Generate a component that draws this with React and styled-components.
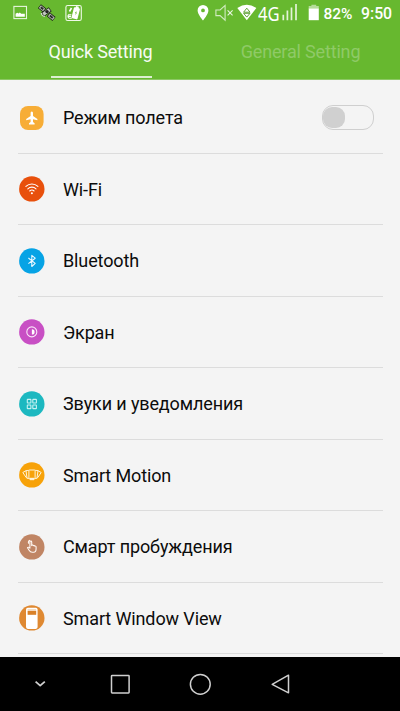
import React from 'react';
import styled, { createGlobalStyle } from 'styled-components';

const GlobalStyle = createGlobalStyle`
  * {
    box-sizing: border-box;
  }

  body {
    margin: 0;
    background: #f4f4f4;
    font-family: Roboto, 'Noto Sans', sans-serif;
  }
`;

const Screen = styled.div`
  width: 400px;
  height: 711px;
  display: flex;
  flex-direction: column;
  overflow: hidden;
  background: #f4f4f4;
`;

const Header = styled.header`
  flex: none;
  height: 80px;
  background: #67b82f;
  border-bottom: 1px solid #8dc865;
`;

const StatusBar = styled.div`
  height: 26px;
  display: flex;
  align-items: center;
  padding: 0 8px 0 12px;
  color: #fff;
`;

const StatusIcon = styled.svg`
  flex: none;
  display: block;
  width: ${({ $w }) => $w}px;
  height: 26px;
  margin-left: ${({ $gap }) => $gap || 0}px;
`;

const StatusText = styled.span`
  flex: none;
  width: ${({ $w }) => $w}px;
  margin-left: ${({ $gap }) => $gap}px;
  font-size: ${({ $size }) => $size}px;
  font-weight: 500;
  line-height: 26px;
  padding-top: 1px;
  white-space: nowrap;
`;

const NetworkText = styled.span`
  flex: none;
  width: 22px;
  margin-left: 1px;
  font-family: 'Noto Sans', sans-serif;
  font-size: 20.5px;
  line-height: 26px;
  white-space: nowrap;
  transform: scaleX(0.81);
  transform-origin: left center;
`;

const Spacer = styled.div`
  flex: 1;
`;

const Tabs = styled.nav`
  display: flex;
  height: 53px;
`;

const Tab = styled.div`
  width: 200px;
  display: flex;
  flex-direction: column;
  align-items: center;
  padding: 1px 0 0 1px;
  font-size: 18px;
  line-height: 49px;
  letter-spacing: -0.16px;
  color: ${({ $active }) => ($active ? '#f6fbf2' : '#8fca67')};
`;

const TabLine = styled.div`
  width: 101px;
  height: 2px;
  margin-left: 2px;
  background: #dcefd0;
`;

const List = styled.main`
  flex: 1;
  min-height: 0;
  overflow: hidden;
  padding: 2px 17.5px 0 18px;
`;

const Row = styled.div`
  display: flex;
  align-items: center;
  height: 71.5px;
  padding: 1px 9px 0 1px;
  border-bottom: 1px solid #dcdcdc;
`;

const Badge = styled.svg`
  flex: none;
  width: 26px;
  height: 26px;
`;

const Label = styled.span`
  flex: 1;
  margin-left: 18px;
  padding-top: 1px;
  font-size: 18px;
  line-height: 24px;
  letter-spacing: -0.12px;
  color: #0c0c0c;
`;

const Switch = styled.div`
  width: 52px;
  height: 25px;
  padding: 1px 0;
  border: 1px solid #cfcfcf;
  border-radius: 11px;
`;

const Knob = styled.div`
  width: 22px;
  height: 21px;
  border-radius: 9px;
  background: #d0d0d0;
`;

const NavBar = styled.footer`
  flex: none;
  height: 54px;
  display: flex;
  background: #000;
`;

const NavButton = styled.div`
  width: 80px;
  height: 54px;
  display: flex;
  align-items: center;
  justify-content: center;
`;

const NavIcon = styled.svg`
  width: 24px;
  height: 24px;
  fill: none;
  stroke: #cfcfcf;
  stroke-width: 1.5;
  stroke-linejoin: round;
`;

const glyphs = {
  plane: (
    <path
      d="M12.8 6.5c.8 0 1.2.8 1.2 1.8v2.6l4.4 3v1.4L14 14.2v2.9l1.6 1.2v1.1h-5.6v-1.1l1.6-1.2v-2.9l-4.4 1.1v-1.4l4.4-3V8.3c0-1 .4-1.8 1.2-1.8z"
      fill="#fff"
    />
  ),
  wifi: (
    <g fill="none" stroke="#fff" strokeWidth="1.1" strokeLinecap="round">
      <path d="M6.9 10.4c3.4-3.2 8.6-3.2 12 0M8.8 12.8c2.3-2.2 5.9-2.2 8.2 0M10.7 15c1.3-1.2 3.1-1.2 4.4 0" />
      <circle cx="12.9" cy="17.3" r=".5" />
    </g>
  ),
  bluetooth: (
    <path
      d="M9.4 10l6.8 5.4-3.4 3.1V7.4l3.4 2.8-6.8 5.4"
      fill="none"
      stroke="#e9f8ff"
      strokeWidth="1.1"
      strokeLinejoin="round"
    />
  ),
  display: (
    <g>
      <circle cx="12.8" cy="12.9" r="5" fill="none" stroke="#fae5f8" strokeWidth="1.1" />
      <path d="M12.9 10.2a2.7 2.7 0 0 1 0 5.4z" fill="#fff" />
    </g>
  ),
  sound: (
    <g fill="none" stroke="#c8f2f2" strokeWidth="1.1">
      <rect x="8.3" y="8.4" width="3.6" height="3.6" rx=".4" />
      <rect x="13.8" y="8.4" width="3.6" height="3.6" rx=".4" />
      <rect x="8.3" y="14" width="3.6" height="3.6" rx=".4" />
      <rect x="13.8" y="14" width="3.6" height="3.6" rx=".4" />
    </g>
  ),
  motion: (
    <g fill="none" stroke="#fff3d6" strokeWidth="1" strokeLinejoin="round">
      <rect x="9.9" y="8" width="6.2" height="8.6" rx=".5" />
      <path d="M9.9 8.3l-2.9.3 1 7.6 1.9.4M7 8.7l-3.2 1.8 3.4 5 1 .6M16.1 8.3l2.9.3-1 7.6-1.9.4M19 8.7l3.2 1.8-3.4 5-1 .6" />
      <path d="M11 16.3h4v1.4h-4z" fill="#fff" />
    </g>
  ),
  wake: (
    <path
      d="M10.9 14.2V7.9c0-1.2 1.8-1.2 1.8 0v3.7c.4-.8 1.5-.7 1.6.2.4-.6 1.4-.4 1.5.4.5-.5 1.3 0 1.3.8v1.8c0 2-1 3.4-2.4 3.4h-1.5c-1.5 0-2.4-.8-3.1-2l-1.6-2.5c.7-.9 1.6-.4 2.4.5zM9.8 9.6c-.9-1.3-.3-2.8 1.2-3.2"
      fill="none"
      stroke="#fff8f3"
      strokeWidth="1.1"
      strokeLinejoin="round"
    />
  ),
  cover: (
    <g>
      <rect x="7" y="2.7" width="11.6" height="21.2" rx="1.8" fill="#fff" />
      <rect x="8.6" y="5.7" width="8.6" height="4.1" fill="#d98128" />
      <path d="M8.6 4.5h8.4" stroke="#efc79b" strokeWidth=".6" />
    </g>
  ),
};

const rows = [
  { label: 'Режим полета', glyph: 'plane', color: '#f7ad36', square: true, toggle: true },
  { label: 'Wi-Fi', glyph: 'wifi', color: '#e8500c' },
  { label: 'Bluetooth', glyph: 'bluetooth', color: '#06a3e5' },
  { label: 'Экран', glyph: 'display', color: '#c84fc4' },
  { label: 'Звуки и уведомления', glyph: 'sound', color: '#1cb8c0' },
  { label: 'Smart Motion', glyph: 'motion', color: '#f7a209' },
  { label: 'Смарт пробуждения', glyph: 'wake', color: '#c08564' },
  { label: 'Smart Window View', glyph: 'cover', color: '#df8932' },
];

const SettingRow = ({ label, glyph, color, square, toggle }) => (
  <Row>
    <Badge viewBox="0 0 26 26">
      {square ? (
        <rect x="1" y="1" width="23.6" height="24" rx="8" fill={color} />
      ) : (
        <circle cx="12.8" cy="12.9" r="12.7" fill={color} />
      )}
      {glyphs[glyph]}
    </Badge>
    <Label>{label}</Label>
    {toggle && (
      <Switch>
        <Knob />
      </Switch>
    )}
  </Row>
);

const Status = () => (
  <StatusBar>
    {/* screenshot saved */}
    <StatusIcon $w={16} $gap={1} viewBox="0 0 16 26">
      <rect x=".9" y="6.4" width="12.6" height="12.2" fill="none" stroke="#e6f5dc" strokeWidth="1.1" />
      <path d="M2.6 16.8v-3l1.7-1.1 1.3.9 1.2-1.2 1.4 1.3h3.6v3.1z" fill="#fff" />
    </StatusIcon>
    {/* satellite */}
    <StatusIcon $w={18} $gap={9} viewBox="0 0 18 26">
      <path d="M1.4 6.2l5.2 4.2M10.4 14.4l5.6 4.6" stroke="#1d2418" strokeWidth="5" />
      <path d="M1.9 6.6l4.2 3.4M11 14.9l4.6 3.8" stroke="#b9c0b4" strokeWidth="3.4" />
      <path d="M2.8 7.3l2.4 2M11.9 15.6l2.8 2.3" stroke="#2c2c2c" strokeWidth="2" />
      <path d="M4.6 14.8l7.6-5.6" stroke="#1d2418" strokeWidth="5" />
      <path d="M5.2 14.4l6.4-4.8" stroke="#c2c9be" strokeWidth="3.4" />
      <circle cx="9" cy="11.6" r="1.7" fill="#222" />
      <path d="M3.2 13q0 3.2 3.6 3.6" fill="none" stroke="#dfe5dc" strokeWidth="1" />
    </StatusIcon>
    {/* battery saver */}
    <StatusIcon $w={18} $gap={8.5} viewBox="0 0 18 26">
      <rect x=".9" y="5.5" width="15.4" height="15" rx="1.8" fill="none" stroke="#eff9e8" strokeWidth="1.1" />
      <g transform="rotate(14 10 12.5)">
        <rect x="7.8" y="7.4" width="6.2" height="11.4" rx="1" fill="#fff" />
        <rect x="9.4" y="6" width="3" height="2" fill="#fff" />
        <path d="M11.2 10.4l-1.2 2.6h1l-.3 2.2 1.4-2.9H11z" fill="#67b82f" />
      </g>
      <path d="M6.4 14.7H3.6c-1 1.2-.8 3.4.8 3.6h2.4M3 16.4h3" fill="none" stroke="#fff" strokeWidth="1.1" />
      <path d="M4.5 11.5l2-3.5" stroke="#fff" strokeWidth="1.6" />
    </StatusIcon>
    <Spacer />
    {/* location */}
    <StatusIcon $w={12} viewBox="0 0 12 26">
      <path
        d="M6 5a5.4 5.4 0 0 0-5.4 5.4C.6 14.2 6 20.4 6 20.4s5.4-6.2 5.4-10A5.4 5.4 0 0 0 6 5zm0 3.5a1.9 1.9 0 1 1 0 3.8 1.9 1.9 0 0 1 0-3.8z"
        fill="#fff"
      />
    </StatusIcon>
    {/* muted */}
    <StatusIcon $w={19} $gap={6} viewBox="0 0 19 26">
      <g fill="none" stroke="#d3ebc3" strokeWidth="1.1">
        <path d="M.9 10h4.2l5-4.6v14.8l-5-4.6H.9z" />
        <path d="M12.6 10.3l5 5M17.6 10.3l-5 5" stroke="#eaf6e2" />
      </g>
    </StatusIcon>
    {/* wi-fi with data arrows */}
    <StatusIcon $w={20} $gap={3.5} viewBox="0 0 20 26">
      <path d="M.3 8Q9.8 1.4 19.3 8L9.8 20.3z" fill="#fff" />
      <path d="M6.6 12.2l3.2-4 3.2 4zM6.6 13.3h6.4l-3.2 3.8z" fill="#fff" stroke="#4f9821" strokeWidth=".9" />
    </StatusIcon>
    <NetworkText>4G</NetworkText>
    {/* signal strength */}
    <StatusIcon $w={16} $gap={2} viewBox="0 0 16 26">
      <path d="M1.3 20.2v-5.5M5.4 20.2V10.6M9.5 20.2V7.6M14 20.2V4" stroke="#e3f3d8" strokeWidth="1.7" />
    </StatusIcon>
    <StatusIcon $w={12} $gap={10} viewBox="0 0 12 26">
      <path d="M3.4 4.8h4.8V6h2.6v3H.7V6h2.7z" fill="#b5dc9a" />
      <path d="M.7 8.6h10.1v11.6H.7z" fill="#fff" />
    </StatusIcon>
    <StatusText $w={30} $gap={3.5} $size={15.5}>82%</StatusText>
    <StatusText $w={31} $gap={7.5} $size={15.8}>9:50</StatusText>
  </StatusBar>
);

const App = () => {
  return (
    <>
      <GlobalStyle />
      <Screen>
        <Header>
          <Status />
          <Tabs>
            <Tab $active>
              Quick Setting
              <TabLine />
            </Tab>
            <Tab>General Setting</Tab>
          </Tabs>
        </Header>
        <List>
          {rows.map((row) => (
            <SettingRow key={row.label} {...row} />
          ))}
        </List>
        <NavBar>
          <NavButton>
            <NavIcon viewBox="0 0 24 24">
              <path d="M7.6 9.6l4.6 4 4.6-4" strokeWidth="1.8" />
            </NavIcon>
          </NavButton>
          <NavButton>
            <NavIcon viewBox="0 0 24 24">
              <rect x="3.5" y="3.5" width="17.6" height="17.4" rx=".6" />
            </NavIcon>
          </NavButton>
          <NavButton>
            <NavIcon viewBox="0 0 24 24">
              <circle cx="12.3" cy="12.3" r="9.9" />
            </NavIcon>
          </NavButton>
          <NavButton>
            <NavIcon viewBox="0 0 24 24">
              <path d="M20.5 3.2v17.6L4.2 12.4z" />
            </NavIcon>
          </NavButton>
        </NavBar>
      </Screen>
    </>
  );
};

export default App;
